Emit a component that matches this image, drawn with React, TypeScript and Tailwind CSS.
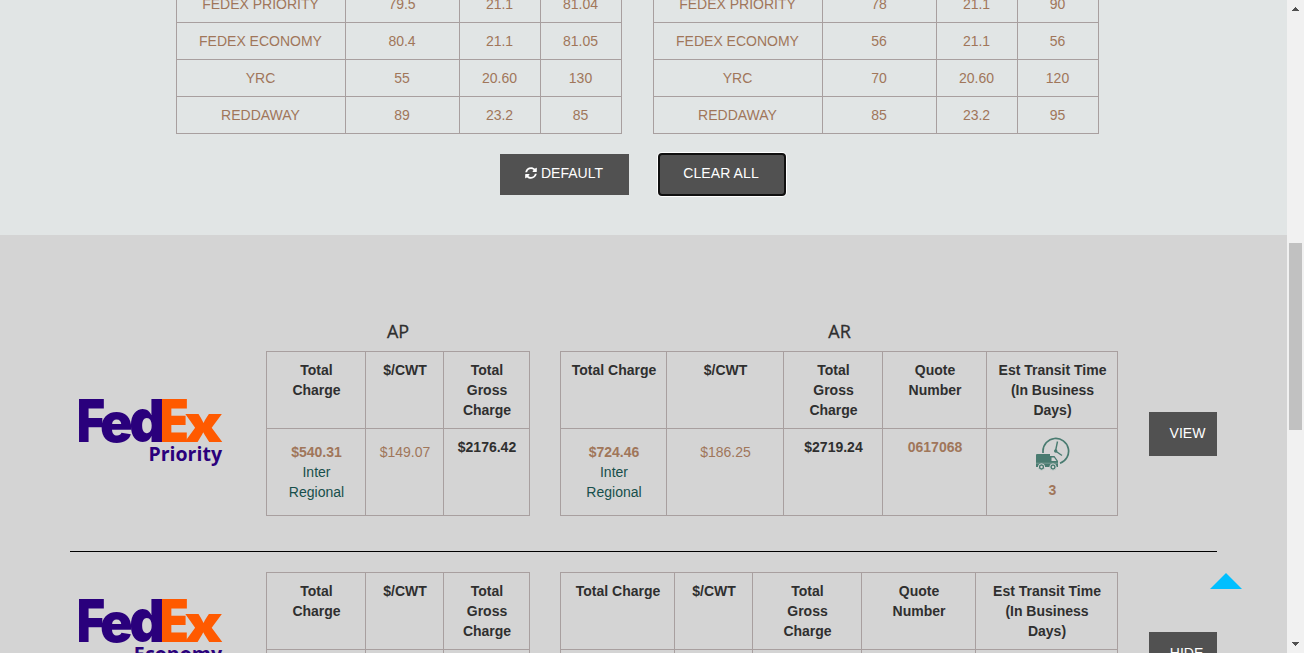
import type { ReactNode } from "react";
import { FaSyncAlt } from "react-icons/fa";

const rates = {
  left: [
    ["FEDEX PRIORITY", "79.5", "21.1", "81.04"],
    ["FEDEX ECONOMY", "80.4", "21.1", "81.05"],
    ["YRC", "55", "20.60", "130"],
    ["REDDAWAY", "89", "23.2", "85"],
  ],
  right: [
    ["FEDEX PRIORITY", "78", "21.1", "90"],
    ["FEDEX ECONOMY", "56", "21.1", "56"],
    ["YRC", "70", "20.60", "120"],
    ["REDDAWAY", "85", "23.2", "95"],
  ],
};

function RateTable({ rows }: { rows: string[][] }) {
  return (
    <div className="grid w-[446px] grid-cols-[169px_114px_81px_81px] border-l border-t border-[#a89f9f] text-center text-sm leading-5 text-[#a0765a]">
      {rows.flatMap((row, r) =>
        row.map((cell, c) => (
          <div key={`${r}-${c}`} className="h-[37px] border-b border-r border-[#a89f9f] pr-px pt-2">
            {cell}
          </div>
        )),
      )}
    </div>
  );
}

function Head({ children }: { children: ReactNode }) {
  return (
    <div className="h-[77px] border-b border-r border-[#a89f9f] pl-[9px] pr-2 pt-2 font-bold text-[#2f2f2f]">{children}</div>
  );
}

function Cell({ children, low = false }: { children?: ReactNode; low?: boolean }) {
  return (
    <div className={`h-[87px] border-b border-r border-[#a89f9f] pl-[9px] pr-2 text-[#a0765a] ${low ? "pt-[13px]" : "pt-2"}`}>
      {children}
    </div>
  );
}

function Charge({ amount }: { amount: string }) {
  return (
    <>
      <b>{amount}</b>
      <div className="text-[#174f4b]">
        Inter
        <br />
        Regional
      </div>
    </>
  );
}

function FedexLogo({ service }: { service: string }) {
  return (
    <svg width="150" height="80" viewBox="0 0 150 80" className="block">
      <g fontFamily="Inter, sans-serif" fontSize="100" fontWeight="900" fill="#2a007c">
        <text transform="matrix(.485 0 0 .595 -2.2 43.3)">F</text>
        <text transform="matrix(.54 0 0 .54 20.9 43.3)">e</text>
        <text transform="matrix(.555 0 0 .59 50.2 43.3)">d</text>
        <g fill="#ff5a00">
          <text transform="matrix(.475 0 0 .595 80.8 43.3)">E</text>
          <text transform="matrix(.64 0 0 .52 105 43.3)">x</text>
        </g>
      </g>
      <text
        x="143"
        y="62"
        textAnchor="end"
        fontFamily="Open Sans, sans-serif"
        fontSize="19.5"
        fontWeight="700"
        fill="#2a007c"
      >
        {service}
      </text>
    </svg>
  );
}

function TransitIcon() {
  return (
    <svg width="34" height="34" viewBox="0 0 34 34" fill="none" className="ml-10 block">
      <path d="M7 16V14A12.8 12.8 0 1 1 24 26.3" stroke="#497b70" strokeWidth="1.7" />
      <path d="M21.5 4.5 19.5 14 26 18.5" stroke="#497b70" strokeWidth="1.4" />
      <circle cx="19.7" cy="14" r="1.7" fill="#497b70" />
      <path d="M0 18Q0 17 1 17H14V19H18.5L22 24V30H0Z" fill="#497b70" />
      <path d="M15.5 20.5H18L20.5 24H15.5Z" fill="#d4d4d4" />
      <path d="M0 26.2H22" stroke="#8eaaa3" strokeWidth=".7" />
      <g fill="#497b70" stroke="#d4d4d4">
        <circle cx="5.5" cy="30" r="3.2" />
        <circle cx="17" cy="30" r="3.2" />
      </g>
      <g fill="#d4d4d4">
        <circle cx="5.5" cy="30" r="1.2" />
        <circle cx="17" cy="30" r="1.2" />
      </g>
    </svg>
  );
}

function ApHeads() {
  return (
    <>
      <Head>Total<br />Charge</Head>
      <Head>$/CWT</Head>
      <Head>Total<br />Gross<br />Charge</Head>
    </>
  );
}

function ArHeads() {
  return (
    <>
      <Head><span className="whitespace-nowrap">Total Charge</span></Head>
      <Head>$/CWT</Head>
      <Head>Total<br />Gross<br />Charge</Head>
      <Head>Quote<br />Number</Head>
      <Head>
        <span className="whitespace-nowrap">Est Transit Time</span>
        <br />
        (In Business
        <br />
        Days)
      </Head>
    </>
  );
}

function Scrollbar() {
  return (
    <div className="flex h-full w-[17px] shrink-0 flex-col items-center bg-[#f1f1f1]">
      <svg width="17" height="17" shapeRendering="crispEdges"><path d="M5 11 8.5 7 12 11Z" fill="#505050" /></svg>
      <div className="mt-[226px] h-[187px] w-[13px] bg-[#c1c1c1]" />
      <svg width="17" height="17" className="mt-auto block" shapeRendering="crispEdges"><path d="M5 6 8.5 10 12 6Z" fill="#505050" /></svg>
    </div>
  );
}

export default function App() {
  return (
    <div className="flex h-[653px] w-[1304px] overflow-hidden font-['Liberation_Sans',Arial,sans-serif]">
      <main className="relative h-full w-[1287px] overflow-hidden bg-[#d4d4d4] text-sm leading-5">
        <section className="h-[235px] overflow-hidden bg-[#e1e5e5]">
          <div className="-mt-[15px] ml-[176px] flex gap-[31px]">
            <RateTable rows={rates.left} />
            <RateTable rows={rates.right} />
          </div>
          <div className="ml-[500px] mt-[19px] flex items-center gap-[29px] text-white">
            <button className="flex h-[41px] w-[129px] items-center justify-center gap-1 bg-[#515151] pb-[3px] pr-px">
              <FaSyncAlt className="size-3" />
              DEFAULT
            </button>
            <button className="h-[43px] w-32 rounded-[4px] border-2 border-[#101010] bg-[#515151] pb-[3px] pr-[2px] tracking-[0.1px] ring-1 ring-white">
              CLEAR ALL
            </button>
          </div>
        </section>

        <section>
          <div className="flex h-[116px] items-end pb-[9px] font-['Open_Sans',sans-serif] text-lg font-medium leading-[22px] text-[#2f2f2f] [-webkit-text-stroke:0.3px_#2f2f2f]">
            <h2 className="ml-[266px] w-[264px] text-center">AP</h2>
            <h2 className="ml-[30px] w-[558px] pl-px text-center">AR</h2>
          </div>

          <div className="ml-[70px] flex h-[201px] w-[1147px] border-b border-black">
            <div className="w-[196px] pl-[9px] pt-12">
              <FedexLogo service="Priority" />
            </div>
            <div className="grid h-[165px] w-[264px] grid-cols-[99px_78px_86px] border-l border-t border-[#a89f9f] text-center">
              <ApHeads />
              <Cell low><Charge amount="$540.31" /></Cell>
              <Cell low>$149.07</Cell>
              <Cell><b className="text-[#2f2f2f]">$2176.42</b></Cell>
            </div>
            <div className="ml-[30px] grid h-[165px] w-[558px] grid-cols-[106px_117px_99px_104px_131px] border-l border-t border-[#a89f9f] text-center">
              <ArHeads />
              <Cell low><Charge amount="$724.46" /></Cell>
              <Cell low>$186.25</Cell>
              <Cell><b className="text-[#2f2f2f]">$2719.24</b></Cell>
              <Cell><b>0617068</b></Cell>
              <Cell>
                <TransitIcon />
                <b className="mt-[9px] block">3</b>
              </Cell>
            </div>
            <button className="ml-[31px] mt-[61px] h-11 w-[68px] bg-[#515151] pb-[3px] pl-[9px] text-white">VIEW</button>
          </div>

          <div className="ml-[70px] mt-5 flex w-[1147px]">
            <div className="w-[196px] pl-[9px] pt-[27px]">
              <FedexLogo service="Economy" />
            </div>
            <div className="grid w-[264px] grid-cols-[99px_78px_86px] border-l border-t border-[#a89f9f] text-center">
              <ApHeads />
              <Cell />
              <Cell />
              <Cell />
            </div>
            <div className="ml-[30px] grid w-[558px] grid-cols-[114px_78px_109px_114px_142px] border-l border-t border-[#a89f9f] text-center">
              <ArHeads />
              <Cell />
              <Cell />
              <Cell />
              <Cell />
              <Cell />
            </div>
            <button className="ml-[31px] mt-[60px] h-11 w-[68px] bg-[#515151] pb-[3px] pl-[7px] text-white">HIDE</button>
          </div>
        </section>

        <svg width="32" height="16" className="absolute left-[1210px] top-[573px]"><path d="M0 16 16 0 32 16Z" fill="#00bfff" /></svg>
      </main>
      <Scrollbar />
    </div>
  );
}
